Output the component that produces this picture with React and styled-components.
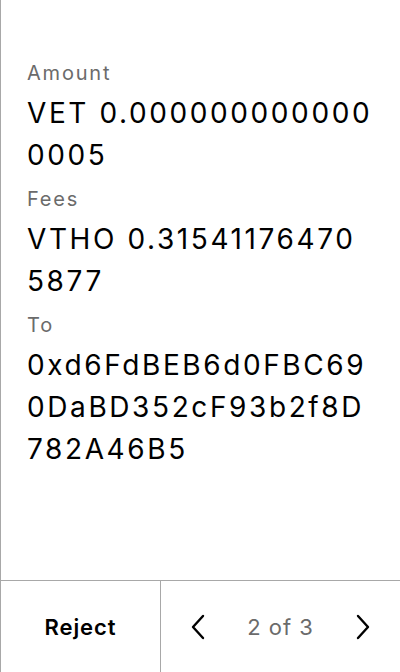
import React from "react";
import styled, { createGlobalStyle } from "styled-components";

const Global = createGlobalStyle`
  html, body { margin: 0; padding: 0; background: #fff; }
  body { font-family: Inter, "Noto Sans", sans-serif; -webkit-font-smoothing: antialiased; }
  * { box-sizing: border-box; }
`;

const Screen = styled.div`
  width: 400px;
  height: 672px;
  display: flex;
  flex-direction: column;
  border-left: 1px solid #a8a8a8;
  background: #fff;
`;

const Content = styled.div`
  flex: 1;
  padding: 59px 26px 0 26px;
  display: flex;
  flex-direction: column;
`;

const Field = styled.div`
  display: flex;
  flex-direction: column;
  margin-bottom: 9px;
`;

const Label = styled.div`
  font-size: 20px;
  line-height: 28px;
  letter-spacing: 1.8px;
  color: #6b6b6b;
  margin-bottom: 5px;
`;

const Value = styled.div`
  font-size: 28px;
  line-height: 42px;
  letter-spacing: 2.6px;
  color: #000;
  word-break: break-all;
`;

const Footer = styled.div`
  height: 92px;
  border-top: 1px solid #a8a8a8;
  display: flex;
`;

const RejectButton = styled.button`
  width: 160px;
  border: none;
  border-right: 1px solid #a8a8a8;
  background: transparent;
  font-family: Inter, sans-serif;
  font-size: 22px;
  font-weight: 600;
  letter-spacing: 0.9px;
  color: #000;
  padding: 0;
`;

const Pager = styled.div`
  flex: 1;
  display: flex;
  align-items: center;
  justify-content: space-between;
  padding: 0 27px;
`;

const Arrow = styled.button`
  border: none;
  background: transparent;
  padding: 0;
  width: 20px;
  height: 32px;
  display: flex;
  align-items: center;
  justify-content: center;
`;

const PageText = styled.span`
  font-size: 22px;
  letter-spacing: 1px;
  color: #6b6b6b;
`;

const Chevron = ({ dir }) => (
  <svg width="16" height="26" viewBox="0 0 16 26" fill="none">
    <path
      d={dir === "left" ? "M13 2 L3 13 L13 24" : "M3 2 L13 13 L3 24"}
      stroke="#000"
      strokeWidth="2.4"
      strokeLinecap="round"
      strokeLinejoin="round"
    />
  </svg>
);

const fields = [
  { label: "Amount", value: "VET 0.0000000000000005" },
  { label: "Fees", value: "VTHO 0.315411764705877" },
  { label: "To", value: "0xd6FdBEB6d0FBC690DaBD352cF93b2f8D782A46B5" },
];

export default function App() {
  return (
    <>
      <Global />
      <Screen>
        <Content>
          {fields.map((f) => (
            <Field key={f.label}>
              <Label>{f.label}</Label>
              <Value>{f.value}</Value>
            </Field>
          ))}
        </Content>
        <Footer>
          <RejectButton>Reject</RejectButton>
          <Pager>
            <Arrow aria-label="Previous">
              <Chevron dir="left" />
            </Arrow>
            <PageText>2 of 3</PageText>
            <Arrow aria-label="Next">
              <Chevron dir="right" />
            </Arrow>
          </Pager>
        </Footer>
      </Screen>
    </>
  );
}
